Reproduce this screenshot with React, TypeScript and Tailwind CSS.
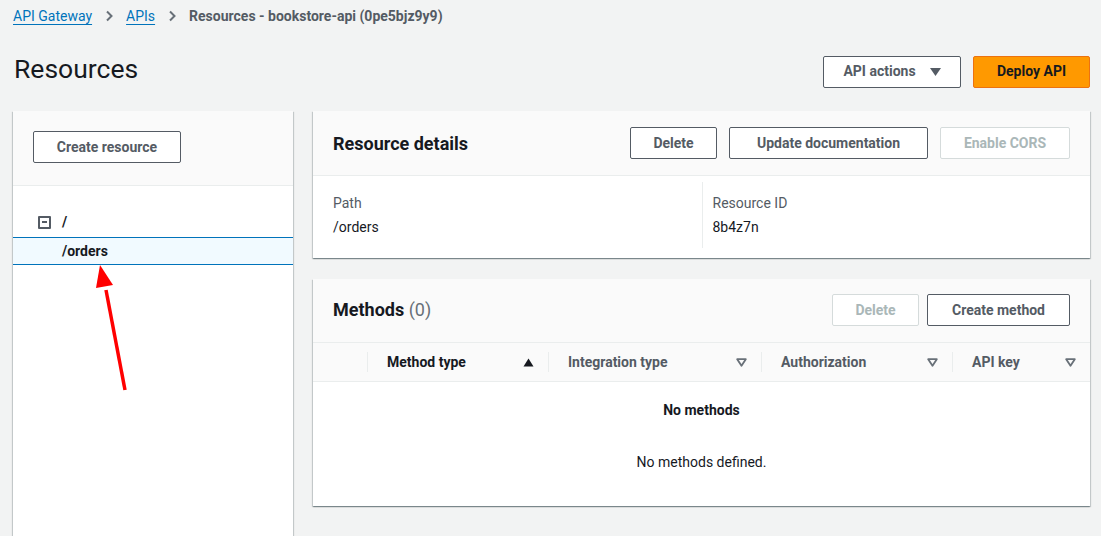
import type { ReactNode } from 'react'

const font = { fontFamily: 'Roboto, "Open Sans", sans-serif' }

function Chevron() {
  return (
    <svg className="w-[12px] h-[12px] text-[#687078]" viewBox="0 0 12 12" fill="none" stroke="currentColor" strokeWidth={2}>
      <path d="M4 1.5l4.5 4.5L4 10.5" />
    </svg>
  )
}

function SortDown() {
  return (
    <svg className="w-[11px] h-[9px] text-[#687078]" viewBox="0 0 11 9" fill="none" stroke="currentColor" strokeWidth={1.8} strokeLinejoin="round">
      <path d="M1.2 1.2h8.6L5.5 7.8z" />
    </svg>
  )
}

function SortUp() {
  return (
    <svg className="w-[11px] h-[9px] text-[#16191f]" viewBox="0 0 11 9" fill="currentColor">
      <path d="M5.5 0.5L10.5 8.5H0.5z" />
    </svg>
  )
}

function Btn({ children, variant = 'normal', className = '' }: { children: ReactNode; variant?: 'normal' | 'disabled' | 'primary'; className?: string }) {
  const styles = {
    normal: 'border border-[#545b64] bg-white text-[#545b64]',
    disabled: 'border border-[#d5dbdb] bg-white text-[#aab7b8]',
    primary: 'border border-[#ec7211] bg-[#ff9900] text-[#16191f]',
  }
  return (
    <button className={`h-8 whitespace-nowrap rounded-[2px] px-4 text-[14px] font-bold flex items-center justify-center gap-3 ${styles[variant]} ${className}`}>
      {children}
    </button>
  )
}

const panel = 'bg-white shadow-[0_1px_1px_0_rgba(0,28,36,0.3),1px_1px_1px_0_rgba(0,28,36,0.15),-1px_1px_1px_0_rgba(0,28,36,0.15)]'

function HeadCell({ label, active, icon, className = '' }: { label: string; active?: boolean; icon: ReactNode; className?: string }) {
  return (
    <div className={`relative flex items-center justify-between pl-5 pr-[14px] ${className}`}>
      <span className="absolute left-0 top-[9px] h-[20px] w-px bg-[#eaeded]" />
      <span className={`text-[14px] font-bold ${active ? 'text-[#16191f]' : 'text-[#545b64]'}`}>{label}</span>
      {icon}
    </div>
  )
}

export default function App() {
  return (
    <main style={font} className="min-h-[536px] h-[536px] overflow-hidden bg-[#f2f3f3] pl-[13px] pr-[11px] text-[#16191f]">
      <nav className="h-[32px] flex items-center gap-[11px] text-[14px]">
        <a className="text-[#0073bb] underline underline-offset-[3px] decoration-1">API Gateway</a>
        <Chevron />
        <a className="text-[#0073bb] underline underline-offset-[3px] decoration-1">APIs</a>
        <Chevron />
        <span className="font-bold text-[#545b64]">Resources - bookstore-api (0pe5bjz9y9)</span>
      </nav>

      <div className="h-[79px] flex items-center justify-between">
        <h1 className="-mt-[6px] pl-[1px] text-[26.5px] font-normal text-[#16191f]">Resources</h1>
        <div className="flex items-center gap-[12px]">
          <Btn className="w-[138px] gap-[14px]">
            API actions
            <svg className="w-[11px] h-[8px]" viewBox="0 0 11 8" fill="currentColor"><path d="M0 0h11L5.5 8z" /></svg>
          </Btn>
          <Btn variant="primary" className="w-[117px]">Deploy API</Btn>
        </div>
      </div>

      <div className="flex gap-5">
        <aside className={`relative w-[280px] h-[440px] shrink-0 ${panel}`}>
          <div className="h-[75px] bg-[#fafafa] border-b border-[#eaeded] pl-5 pt-5">
            <Btn className="w-[148px]">Create resource</Btn>
          </div>
          <div className="pt-[21px]">
            <div className="h-[30px] flex items-center pl-[25px] gap-[11px]">
              <span className="w-[13px] h-[13px] border-2 border-[#545b64] rounded-[1px] flex items-center justify-center">
                <span className="w-[5px] h-[2px] bg-[#545b64]" />
              </span>
              <span className="text-[14px] font-bold">/</span>
            </div>
            <div className="h-[28px] flex items-center pl-[49px] bg-[#f1faff] border-y border-[#0073bb] text-[14px] font-bold">
              /orders
            </div>
          </div>
          <svg className="absolute left-0 top-0 w-[280px] h-[300px] pointer-events-none" viewBox="0 0 280 300">
            <path d="M112 279L93 179" stroke="#ff0000" strokeWidth={3.5} />
            <path d="M87 154L83 177L100 174z" fill="#ff0000" />
          </svg>
        </aside>

        <section className="flex-1 flex flex-col gap-[21px]">
          <div className={panel}>
            <div className="bg-[#fafafa] border-b border-[#eaeded] px-5 py-4 flex items-center justify-between">
              <h2 className="text-[18px] font-bold">Resource details</h2>
              <div className="flex items-center gap-3">
                <Btn className="w-[87px]">Delete</Btn>
                <Btn className="w-[199px]">Update documentation</Btn>
                <Btn variant="disabled" className="w-[130px]">Enable CORS</Btn>
              </div>
            </div>
            <div className="grid grid-cols-2 px-5 pt-[6px] pb-[10px] text-[14px]">
              <div className="py-[11px] flex flex-col gap-1">
                <span className="leading-5 text-[#545b64]">Path</span>
                <span className="leading-5">/orders</span>
              </div>
              <div className="py-[11px] pl-[10px] border-l border-[#eaeded] flex flex-col gap-1">
                <span className="leading-5 text-[#545b64]">Resource ID</span>
                <span className="leading-5">8b4z7n</span>
              </div>
            </div>
          </div>

          <div className={panel}>
            <div className="bg-[#fafafa] border-b border-[#eaeded] px-5 pt-[15px] pb-[16px] flex items-center justify-between">
              <h2 className="-mt-[2px] text-[18px] font-bold">
                Methods <span className="font-normal text-[#687078]">(0)</span>
              </h2>
              <div className="flex items-center gap-2">
                <Btn variant="disabled" className="w-[87px]">Delete</Btn>
                <Btn className="w-[143px]">Create method</Btn>
              </div>
            </div>
            <div className="flex h-[39px] bg-[#fafafa] border-b border-[#eaeded]">
              <div className="w-[54px] shrink-0" />
              <HeadCell label="Method type" active icon={<SortUp />} className="w-[181px]" />
              <HeadCell label="Integration type" icon={<SortDown />} className="w-[213px]" />
              <HeadCell label="Authorization" icon={<SortDown />} className="w-[191px]" />
              <HeadCell label="API key" icon={<SortDown />} className="flex-1" />
            </div>
            <div className="h-[124px] flex flex-col items-center pt-[18px] text-[14px]">
              <span className="leading-5 font-bold">No methods</span>
              <span className="leading-5 mt-[32px]">No methods defined.</span>
            </div>
          </div>
        </section>
      </div>
    </main>
  )
}
